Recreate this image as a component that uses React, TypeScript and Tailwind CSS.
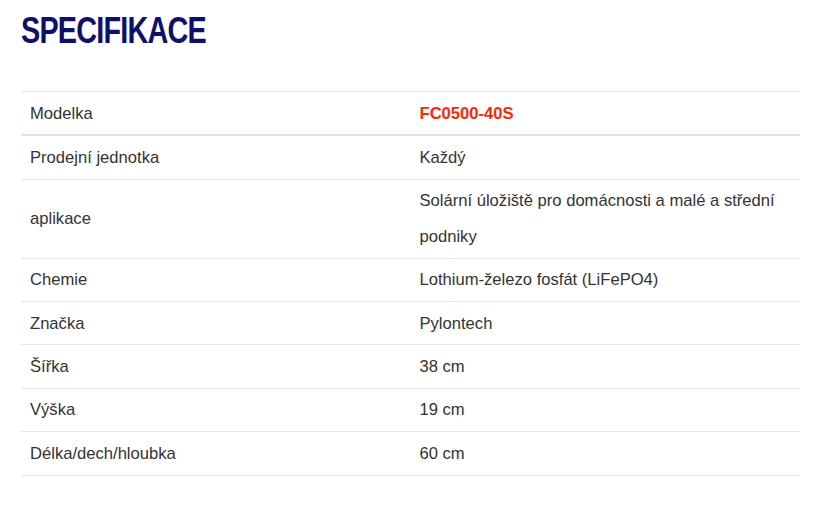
const rows: { label: string; value: string }[] = [
  { label: 'Prodejní jednotka', value: 'Každý' },
  { label: 'aplikace', value: 'Solární úložiště pro domácnosti a malé a střední podniky' },
  { label: 'Chemie', value: 'Lothium-železo fosfát (LiFePO4)' },
  { label: 'Značka', value: 'Pylontech' },
  { label: 'Šířka', value: '38 cm' },
  { label: 'Výška', value: '19 cm' },
  { label: 'Délka/dech/hloubka', value: '60 cm' },
];

export default function App() {
  return (
    <div className="w-[813px] h-[505px] bg-white font-['Liberation_Sans',Arial,sans-serif] text-[#333]">
      <div className="pl-[21px] pr-[13px] pt-[11px]">
        <h1 className="inline-block text-[36px] leading-[40px] font-bold tracking-[-1px] text-[#0f106e] origin-left scale-x-[0.8]">
          SPECIFIKACE
        </h1>
        <table className="mt-[40px] w-full border-collapse text-[16.6px]">
          <thead>
            <tr className="border-t border-[#e6e6e6] border-b-2 border-b-[#e3e0de]">
              <td className="w-1/2 pl-[9px] py-[3.5px] leading-[35.4px] align-middle">Modelka</td>
              <td className="w-1/2 pl-[9px] py-[3.5px] leading-[35.4px] font-bold text-[#f7290b]">FC0500-40S</td>
            </tr>
          </thead>
          <tbody>
            {rows.map((r) => (
              <tr key={r.label} className="border-b border-[#e6e6e6]">
                <td className="pl-[9px] py-[3.5px] leading-[35.4px] align-middle">{r.label}</td>
                <td className="pl-[9px] pr-[9px] py-[3.5px] leading-[35.4px] align-middle">{r.value}</td>
              </tr>
            ))}
          </tbody>
        </table>
      </div>
    </div>
  );
}
